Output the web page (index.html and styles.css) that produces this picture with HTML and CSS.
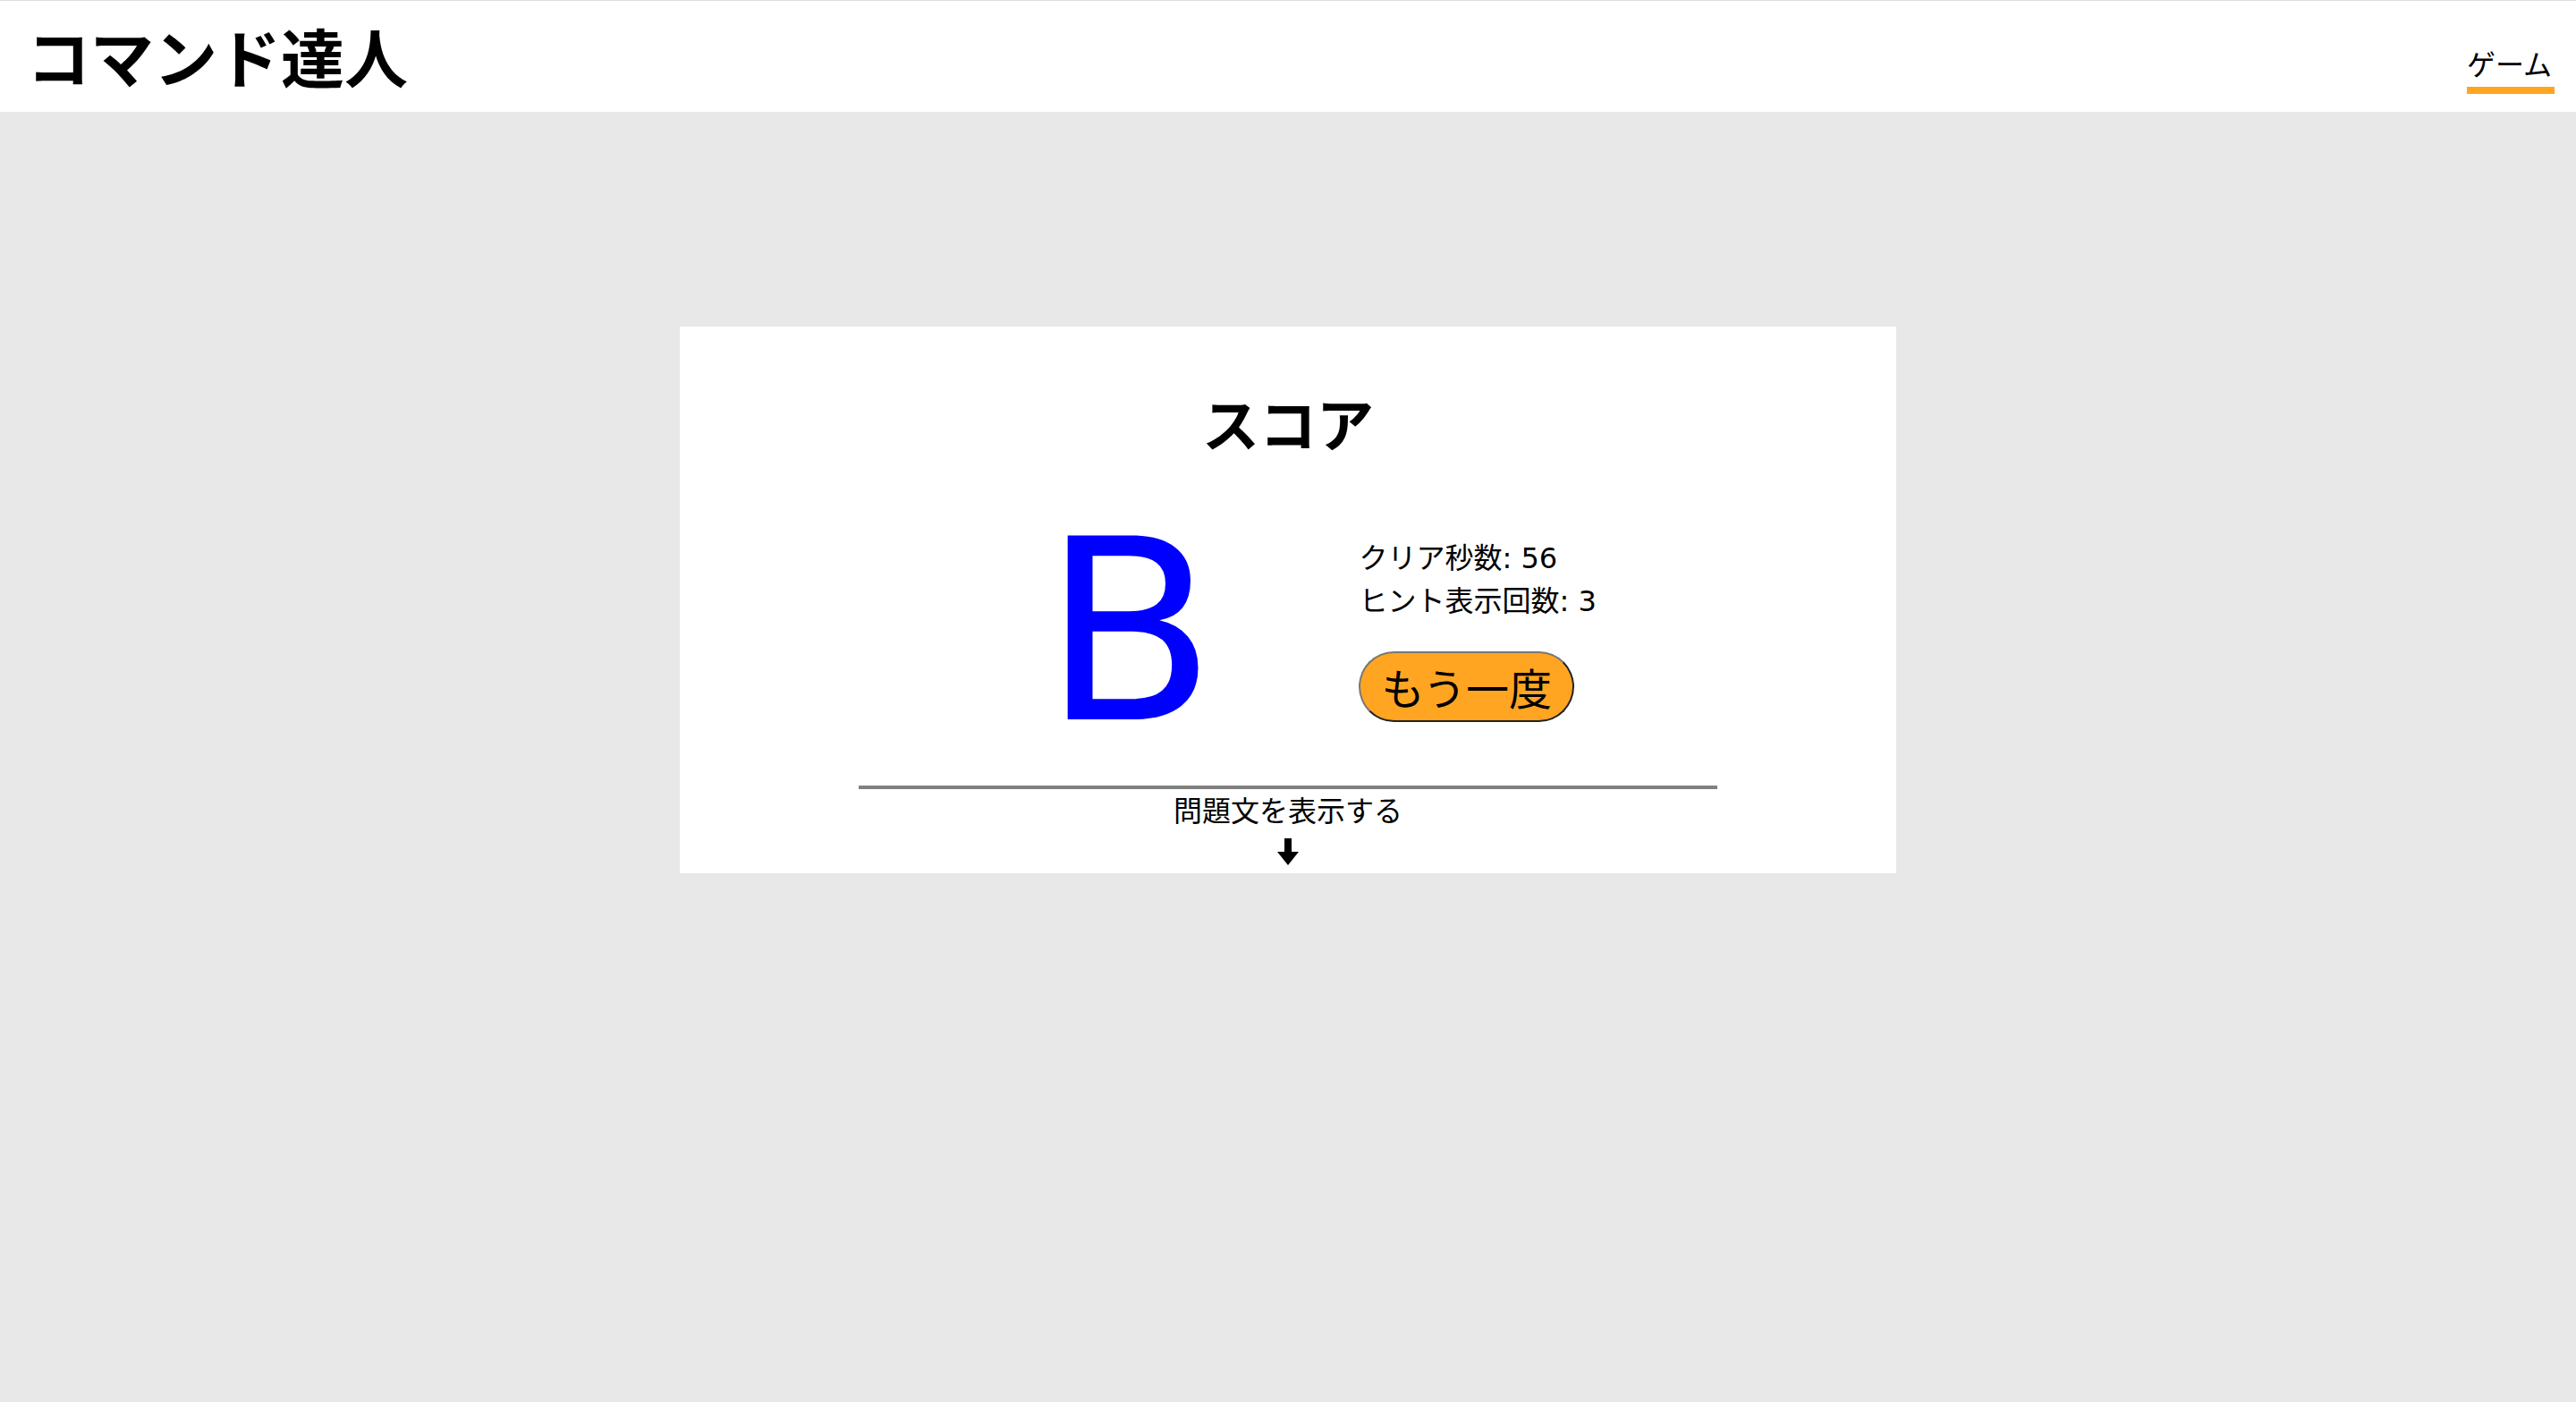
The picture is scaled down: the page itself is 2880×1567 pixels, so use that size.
FILE: index.html
```html
<!DOCTYPE html>
<html lang="ja">
<head>
<meta charset="utf-8">
<title>コマンド達人</title>
<link rel="stylesheet" href="styles.css">
</head>
<body>
<header class="topbar">
  <h1 class="brand">コマンド達人</h1>
  <nav class="nav">
    <a class="nav-item is-active">ゲーム</a>
  </nav>
</header>
<main class="stage">
  <section class="card">
    <h2 class="card-title">スコア</h2>
    <div class="result">
      <div class="grade">B</div>
      <div class="stats">
        <p class="stat">クリア秒数: 56</p>
        <p class="stat">ヒント表示回数: 3</p>
        <button class="retry" type="button">もう一度</button>
      </div>
    </div>
    <hr class="divider">
    <div class="toggle">問題文を表示する</div>
    <div class="arrow">
      <svg width="24" height="30" viewBox="0 0 24 30" aria-hidden="true">
        <rect x="8" y="0" width="8" height="16" fill="#000"/>
        <polygon points="0,15 24,15 12,30" fill="#000"/>
      </svg>
    </div>
  </section>
</main>
</body>
</html>
```

FILE: styles.css
```css
html, body {
  margin: 0;
  padding: 0;
}
body {
  background: #e8e8e8;
  color: #000;
  font-family: "Noto Sans", "Noto Sans CJK JP", sans-serif;
  font-size: 32px;
  min-height: 1567px;
}
.topbar {
  background: #fff;
  border-top: 1px solid #dedede;
  height: 124px;
  display: flex;
  align-items: center;
  justify-content: space-between;
  padding: 0 24px 0 30px;
}
.brand {
  margin: 0 0 4px;
  font-family: "Noto Sans CJK JP", sans-serif;
  font-size: 71px;
  font-weight: 700;
  line-height: 1;
}
.nav {
  display: flex;
  align-self: flex-end;
  margin-bottom: 20px;
}
.nav-item {
  font-family: "Noto Sans CJK JP", sans-serif;
  font-size: 32px;
  line-height: 1.2;
  padding: 0 3px 8px 0;
  border-bottom: 8px solid #ffa521;
  color: #000;
}
.stage {
  padding-top: 240px;
}
.card {
  width: 1360px;
  margin: 0 auto;
  background: #fff;
  display: flex;
  flex-direction: column;
  align-items: center;
  padding-top: 68px;
  padding-bottom: 9px;
}
.card-title {
  margin: 0;
  font-family: "Noto Sans CJK JP", sans-serif;
  font-size: 64px;
  font-weight: 700;
  line-height: 1.2;
}
.result {
  align-self: flex-start;
  display: flex;
  align-items: flex-start;
  margin-top: 40px;
  margin-left: 406px;
  gap: 160px;
}
.grade {
  margin-top: 16px;
  color: #0000ff;
  font-family: "DejaVu Sans", sans-serif;
  font-size: 282px;
  line-height: 1;
}
.stats {
  padding-top: 50px;
  display: flex;
  flex-direction: column;
  align-items: flex-start;
}
.stat {
  margin: 0;
  font-family: "DejaVu Sans", "Noto Sans CJK JP", sans-serif;
  font-size: 32px;
  line-height: 48px;
}
.retry {
  margin-top: 32px;
  height: 79px;
  padding: 0 23px;
  border: 2px solid;
  border-color: #777 #222 #222 #777;
  border-radius: 40px;
  background: #ffa521;
  color: #000;
  font-family: "Noto Sans CJK JP", sans-serif;
  font-size: 48px;
  line-height: 1;
}
.divider {
  width: 960px;
  height: 4px;
  border: 0;
  background: #808080;
  margin: 30px 0 0;
}
.toggle {
  font-family: "Noto Sans CJK JP", sans-serif;
  font-size: 32px;
  line-height: 48px;
  margin-top: -2px;
}
.arrow {
  display: flex;
  margin-top: 9px;
}
```
